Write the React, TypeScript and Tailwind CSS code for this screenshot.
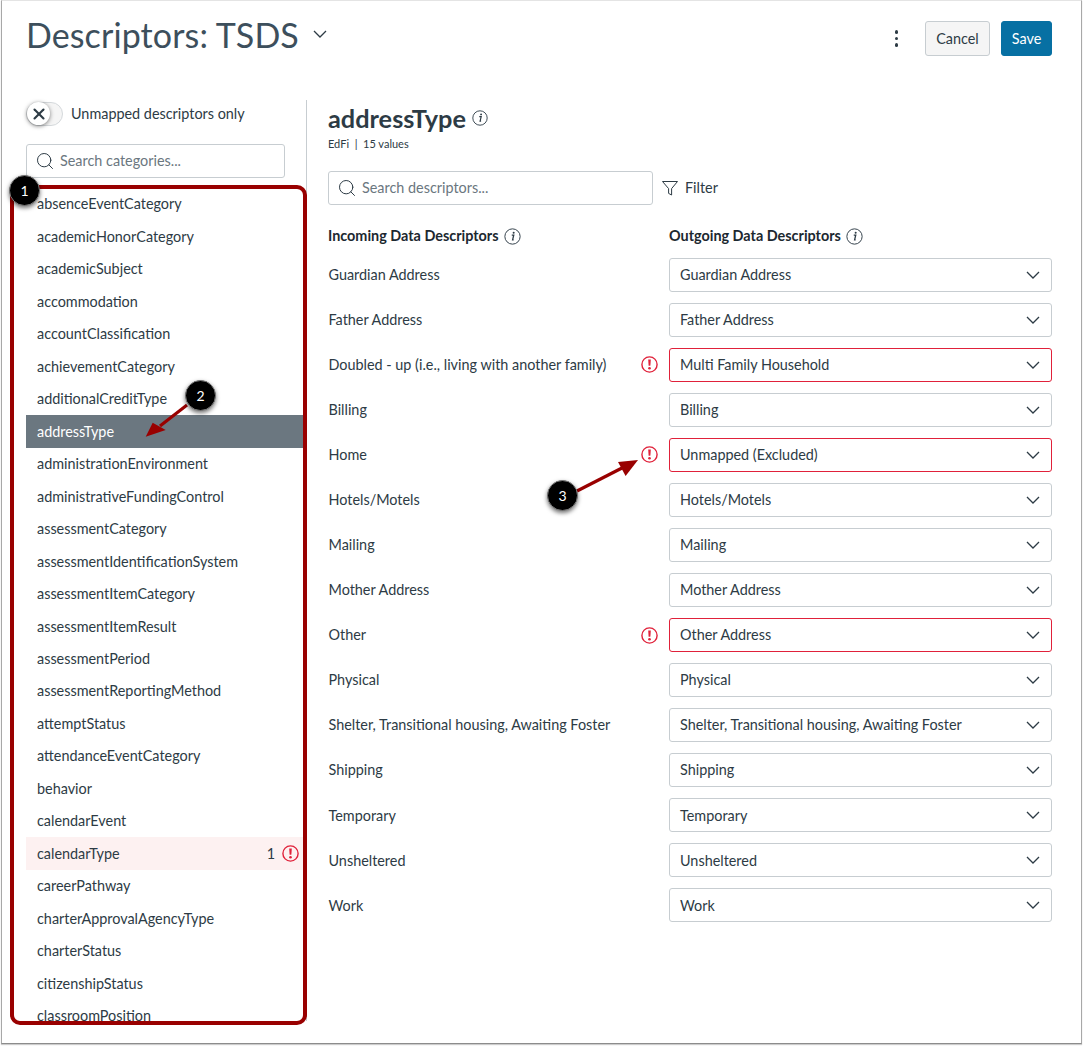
import { Search, X } from 'lucide-react'

const categories = [
  'absenceEventCategory','academicHonorCategory','academicSubject','accommodation','accountClassification',
  'achievementCategory','additionalCreditType','addressType','administrationEnvironment','administrativeFundingControl',
  'assessmentCategory','assessmentIdentificationSystem','assessmentItemCategory','assessmentItemResult','assessmentPeriod',
  'assessmentReportingMethod','attemptStatus','attendanceEventCategory','behavior','calendarEvent',
  'calendarType','careerPathway','charterApprovalAgencyType','charterStatus','citizenshipStatus','classroomPosition',
]

const rows = [
  { from: 'Guardian Address', to: 'Guardian Address' },
  { from: 'Father Address', to: 'Father Address' },
  { from: 'Doubled - up (i.e., living with another family)', to: 'Multi Family Household', err: true },
  { from: 'Billing', to: 'Billing' },
  { from: 'Home', to: 'Unmapped (Excluded)', err: true },
  { from: 'Hotels/Motels', to: 'Hotels/Motels' },
  { from: 'Mailing', to: 'Mailing' },
  { from: 'Mother Address', to: 'Mother Address' },
  { from: 'Other', to: 'Other Address', err: true },
  { from: 'Physical', to: 'Physical' },
  { from: 'Shelter, Transitional housing, Awaiting Foster', to: 'Shelter, Transitional housing, Awaiting Foster' },
  { from: 'Shipping', to: 'Shipping' },
  { from: 'Temporary', to: 'Temporary' },
  { from: 'Unsheltered', to: 'Unsheltered' },
  { from: 'Work', to: 'Work' },
]

function Warn() {
  return (
    <svg width="17" height="17" viewBox="0 0 17 17" className="shrink-0" aria-hidden="true">
      <circle cx="8.5" cy="8.5" r="7.6" fill="none" stroke="#e0213a" strokeWidth="1.4" />
      <path d="M7.2 3.4h2.6l-.45 6.4h-1.7z" fill="#e0213a" />
      <circle cx="8.5" cy="12.2" r="1.3" fill="#e0213a" />
    </svg>
  )
}

function Info({ size = 16 }: { size?: number }) {
  return (
    <svg width={size} height={size} viewBox="0 0 16 16" className="shrink-0" aria-hidden="true">
      <circle cx="8" cy="8" r="7.2" fill="none" stroke="#2d3b45" strokeWidth="0.9" />
      <path d="M7.3 6.6h1.9l-1.1 4.6h1" fill="none" stroke="#2d3b45" strokeWidth="1.2" />
      <circle cx="9.1" cy="4.4" r="0.95" fill="#2d3b45" />
    </svg>
  )
}

function Chevron({ className = '' }: { className?: string }) {
  return (
    <svg width="14" height="8" viewBox="0 0 14 8" className={className} aria-hidden="true">
      <path d="M1 1l6 6 6-6" fill="none" stroke="#2d3b45" strokeWidth="1.3" />
    </svg>
  )
}

function SearchBox({ text, className }: { text: string; className: string }) {
  return (
    <div className={`flex h-[34px] items-center rounded-[3px] border border-[#c7cdd1] bg-white pl-[8px] ${className}`}>
      <Search size={20} strokeWidth={1.2} className="mr-[5px] text-[#2d3b45]" />
      <span className="text-[14.4px] text-[#6b7780]">{text}</span>
    </div>
  )
}

function Badge({ n, className }: { n: number; className: string }) {
  return (
    <div className={`absolute flex h-[31px] w-[31px] items-center justify-center rounded-full border border-[#777] bg-black text-[14px] text-white shadow-[0_2px_4px_rgba(0,0,0,0.55)] ${className}`}>
      {n}
    </div>
  )
}

export default function App() {
  return (
    <div className="relative h-[1046px] w-[1084px] overflow-hidden bg-white font-['Lato',sans-serif] text-[#2d3b45]">
      <div className="mx-[1px] h-[1044px] w-[1081px] border-x border-b border-t border-x-[#a8a8a8] border-b-[#8c8c8c] border-t-[#e4e4e4] shadow-[0_1px_1px_rgba(0,0,0,0.2)]">
        <header className="flex h-[99px] items-start pl-[24px] pr-[29px]">
          <h1 className="mt-[13px] text-[34px] leading-[42px] font-normal tracking-[0.1px] text-[#3d4f5c]">Descriptors: TSDS</h1>
          <Chevron className="ml-[14px] mt-[29px]" />
          <div className="ml-auto mt-[20px] flex items-center">
            <div className="mr-[27px] flex flex-col gap-[3px]">
              <span className="h-[3.5px] w-[3.5px] rounded-full bg-[#2d3b45]" />
              <span className="h-[3.5px] w-[3.5px] rounded-full bg-[#2d3b45]" />
              <span className="h-[3.5px] w-[3.5px] rounded-full bg-[#2d3b45]" />
            </div>
            <button className="h-[35px] w-[65px] rounded-[3px] border border-[#c7cdd1] bg-[#f5f5f5] text-[14.4px] text-[#2d3b45]">Cancel</button>
            <button className="ml-[11px] h-[35px] w-[51px] rounded-[3px] border border-[#0770a3] bg-[#0770a3] text-[14.4px] text-white">Save</button>
          </div>
        </header>

        <div className="flex">
          <aside className="ml-[24px] h-[921px] w-[280px]">
            <div className="flex h-[26px] items-center pt-[1px]">
              <div className="flex h-[24px] w-[37px] items-center rounded-full border border-[#d5d9dc] bg-[#f5f5f5]">
                <span className="flex h-[23px] w-[23px] items-center justify-center rounded-full bg-white shadow-[0_1px_4px_rgba(0,0,0,0.5)]">
                  <X size={18} strokeWidth={2.8} />
                </span>
              </div>
              <span className="ml-[8px] text-[14.4px]">Unmapped descriptors only</span>
            </div>
            <SearchBox text="Search categories..." className="mt-[18px] w-[259px]" />
            <ul className="mt-[10px] h-[833px] overflow-hidden">
              {categories.map(c => (
                <li
                  key={c}
                  className={`flex h-[32.48px] items-center pl-[11px] pr-[7px] text-[14.4px] ${c === 'addressType' ? 'bg-[#6b7780] text-white' : ''} ${c === 'calendarType' ? 'bg-[#fdf1f1]' : ''}`}
                >
                  <span>{c}</span>
                  {c === 'calendarType' && (
                    <span className="ml-auto flex items-center gap-[7px]">1 <Warn /></span>
                  )}
                </li>
              ))}
            </ul>
          </aside>

          <div className="h-[921px] w-px bg-[#c7cdd1]" />

          <main className="ml-[21px] w-[724px]">
            <div className="flex items-center gap-[6px]">
              <h2 className="text-[25.3px] leading-[36px] font-bold">addressType</h2>
              <Info />
            </div>
            <p className="text-[11px] leading-[15px]">EdFi&nbsp; |&nbsp; 15 values</p>
            <div className="mt-[20px] flex items-center">
              <SearchBox text="Search descriptors..." className="w-[325px]" />
              <svg width="18" height="18" viewBox="0 0 18 18" className="ml-[8px]" aria-hidden="true">
                <path d="M1.5 2.5h15L10.6 9.6v6.4l-3-1.6V9.6z" fill="none" stroke="#2d3b45" strokeWidth="1" strokeLinejoin="round" />
              </svg>
              <span className="ml-[6px] text-[14.4px]">Filter</span>
            </div>
            <div className="mt-[21px] flex h-[20px] items-center text-[14.4px] font-bold text-[#1c2830]">
              <div className="flex w-[341px] items-center gap-[5px]">Incoming Data Descriptors <Info size={17} /></div>
              <div className="flex items-center gap-[5px]">Outgoing Data Descriptors <Info size={17} /></div>
            </div>
            <div className="mt-[11.6px] flex flex-col gap-[11.07px]">
              {rows.map(r => (
                <div key={r.from} className="flex h-[34px] items-center text-[14.4px]">
                  <span className="w-[312px] pl-[0.5px]">{r.from}</span>
                  <span className="flex w-[29px] pl-[1px]">{r.err && <Warn />}</span>
                  <div className={`flex h-[34px] w-[383px] items-center justify-between rounded-[3px] border pl-[10px] pr-[11px] ${r.err ? 'border-[#e0213a]' : 'border-[#c7cdd1]'}`}>
                    <span>{r.to}</span>
                    <Chevron />
                  </div>
                </div>
              ))}
            </div>
          </main>
        </div>
      </div>

      {/* tutorial annotations */}
      <div className="absolute left-[10px] top-[185px] h-[840px] w-[297px] rounded-[10px] border-[4px] border-[#990000]" />
      <svg className="absolute left-0 top-0" width="1084" height="1046" aria-hidden="true">
        <path d="M187 405 L160 426" stroke="#990000" strokeWidth="3.2" />
        <path d="M145.7 436.7 L152.7 422.7 L165.7 430 Z" fill="#990000" />
        <path d="M577 491 L622 468" stroke="#990000" strokeWidth="3.2" />
        <path d="M638 460 L618 462 L625.6 476 Z" fill="#990000" />
      </svg>
      <Badge n={1} className="left-[9px] top-[175px]" />
      <Badge n={2} className="left-[185px] top-[380px]" />
      <Badge n={3} className="left-[547px] top-[480px]" />
    </div>
  )
}
